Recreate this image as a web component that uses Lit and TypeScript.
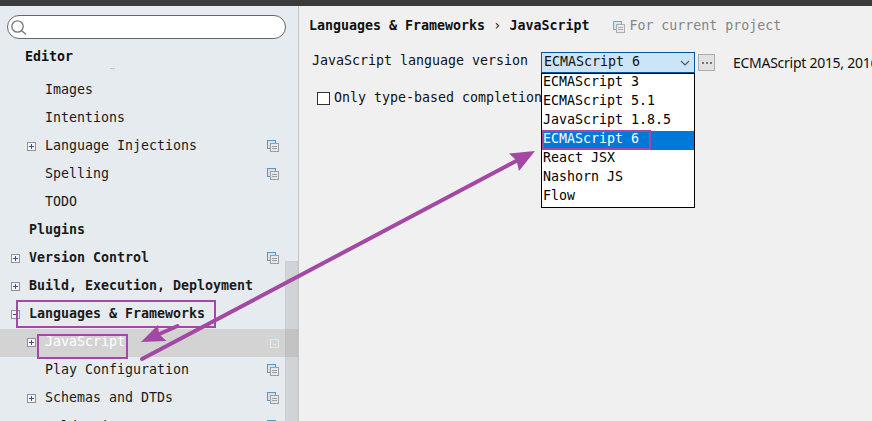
import { LitElement, html, css, svg, nothing } from "lit";
import { customElement, property } from "lit/decorators.js";
import { classMap } from "lit/directives/class-map.js";

interface TreeItem {
  label: string;
  level: 0 | 1;
  toggle?: "plus" | "minus";
  project?: boolean;
  selected?: boolean;
}

const ITEMS: TreeItem[] = [
  { label: "Images", level: 1 },
  { label: "Intentions", level: 1 },
  { label: "Language Injections", level: 1, toggle: "plus", project: true },
  { label: "Spelling", level: 1, project: true },
  { label: "TODO", level: 1 },
  { label: "Plugins", level: 0 },
  { label: "Version Control", level: 0, toggle: "plus", project: true },
  { label: "Build, Execution, Deployment", level: 0, toggle: "plus" },
  { label: "Languages & Frameworks", level: 0, toggle: "minus" },
  { label: "JavaScript", level: 1, toggle: "plus", project: true, selected: true },
  { label: "Play Configuration", level: 1, project: true },
  { label: "Schemas and DTDs", level: 1, toggle: "plus", project: true },
  { label: "Weld Unit", level: 1, project: true },
];

const VERSIONS = [
  "ECMAScript 3",
  "ECMAScript 5.1",
  "JavaScript 1.8.5",
  "ECMAScript 6",
  "React JSX",
  "Nashorn JS",
  "Flow",
];

@customElement("project-icon")
class ProjectIcon extends LitElement {
  @property({ type: Boolean }) faded = false;

  static styles = css`
    :host { display: block; width: 12px; height: 12px; }
    svg { display: block; }
  `;

  render() {
    const back = this.faded ? "#bfe0f2" : "#4f9dc6";
    const backFill = this.faded ? "#d3d3d3" : "#d3e3ec";
    const front = this.faded ? "#e6e6e6" : "#9c9ea0";
    const fill = this.faded ? "#d4d4d4" : "#e6e8ea";
    return html`<svg width="12" height="12" viewBox="0 0 12 12">
      <rect x="0.5" y="0.5" width="8" height="8" fill=${backFill} stroke=${back} />
      <rect x="3.5" y="3.5" width="8" height="8" fill=${fill} stroke=${front} />
      <path d=${this.faded ? "M6 8.5h3" : "M5 6.5h5M5 8.5h5"} stroke=${front} />
    </svg>`;
  }
}

@customElement("settings-tree")
class SettingsTree extends LitElement {
  static styles = css`
    :host { display: block; }
    .row {
      display: flex; align-items: flex-start; height: 28px;
      padding: 0 19px 0 11px; box-sizing: border-box;
      font-size: 13.29px; line-height: 25px; white-space: nowrap; color: #1b1b1b;
    }
    .row.child { padding-left: 27px; }
    .row.root { font-weight: bold; }
    .row.selected { background: #d3d3d3; color: #fff; }
    .row:last-of-type { line-height: 27px; }
    .toggle { width: 18px; height: 9px; padding-top: 9px; }
    .toggle svg { display: block; }
    .label { flex: 1; }
    project-icon { margin-top: 7px; }
  `;

  private toggle(kind?: string) {
    if (!kind) return nothing;
    return html`<svg width="9" height="9">
      <rect x=".5" y=".5" width="8" height="8" fill="#f6f6f6" stroke="#919191" />
      <path d=${kind === "plus" ? "M2 4.5h5M4.5 2v5" : "M2 4.5h5"} stroke="#344f9c" />
    </svg>`;
  }

  render() {
    return ITEMS.map(
      (i) => html`<div class=${classMap({ row: true, child: i.level === 1, root: i.level === 0, selected: !!i.selected })}>
        <span class="toggle">${this.toggle(i.toggle)}</span>
        <span class="label">${i.label}</span>
        ${i.project ? html`<project-icon ?faded=${i.selected}></project-icon>` : nothing}
      </div>`
    );
  }
}

@customElement("app-root")
class AppRoot extends LitElement {
  static styles = css`
    :host {
      display: flex; flex-direction: column; position: relative;
      width: 872px; height: 421px; overflow: hidden; background: #f0f0f0;
      font-family: "DejaVu Sans Mono", "Liberation Mono", monospace;
      font-size: 13.29px; color: #111; white-space: nowrap;
    }
    .titlebar { height: 6px; flex: none; background: #3b3b3b; }
    .body { flex: 1; min-height: 0; display: flex; }
    .sidebar {
      width: 298px; flex: none; position: relative; overflow: hidden;
      background: #e6ebef; border-right: 1px solid #c3c5c7;
    }
    .search {
      box-sizing: border-box; width: 279px; height: 24px; margin: 9px 0 0 7px;
      border: 1px solid #666; border-radius: 12px; background: #fff; padding: 4px 3px;
    }
    .search svg { display: block; }
    .editor { height: 38px; box-sizing: border-box; padding: 4px 0 0 25px; line-height: 28px; font-weight: bold; }
    .remnant { position: absolute; left: 110px; top: 62px; width: 5px; height: 1px; background: #c5c8cb; }
    .scroll {
      position: absolute; right: 0; top: 255px; bottom: 0; width: 13px; box-sizing: border-box;
      background: rgba(150, 152, 153, 0.27); border: 1px solid rgba(150, 152, 153, 0.1); border-bottom: 0;
    }
    .main { flex: 1; min-width: 0; padding-left: 10px; overflow: hidden; }
    .crumbs { display: flex; height: 40px; line-height: 40px; font-weight: bold; }
    .sep { width: 24.5px; text-align: center; font-weight: normal; }
    .scope { display: flex; margin-left: 24px; gap: 4px; font-weight: normal; color: #858585; }
    .scope project-icon { margin-top: 15px; opacity: 0.8; }
    .version { display: flex; height: 40px; padding: 6px 0 0 3px; box-sizing: border-box; }
    .version label { width: 229px; line-height: 18px; flex: none; }
    .combo {
      position: relative; width: 154px; height: 21px; box-sizing: border-box; flex: none;
      background: #cce4f7; border: 1px solid #00549a; padding-left: 2px; line-height: 17px;
    }
    .combo .arrow { position: absolute; right: 4px; top: 7px; }
    .list {
      position: absolute; left: -1px; top: 20px; width: 152px; height: 133px; z-index: 1;
      border: 1px solid #000; background: #fff;
    }
    .option { height: 19px; line-height: 16px; padding-left: 1px; color: #000; }
    .option.active { background: #0078d7; color: #fff; }
    .more {
      width: 17px; height: 17px; box-sizing: border-box; margin: 2px 18px 0 3px; flex: none;
      border: 1px solid #adadad; background: #e1e1e1;
      display: flex; align-items: center; justify-content: center; gap: 2px;
    }
    .more i { width: 2px; height: 2px; background: #777; }
    .note { font: 14px/20px "Noto Sans", sans-serif; letter-spacing: -0.27px; margin-top: 1px; }
    .check { display: flex; padding: 4px 0 0 8px; gap: 4px; line-height: 15px; }
    .box { width: 13px; height: 13px; box-sizing: border-box; border: 1px solid #333; background: #fff; margin-top: 2px; }
    .marks { position: absolute; left: 0; top: 0; z-index: 2; }
  `;

  private frame(x: number, y: number, w: number, h: number) {
    return svg`<rect x=${x + 1} y=${y + 1} width=${w - 2} height=${h - 2} />`;
  }

  render() {
    return html`
      <div class="titlebar"></div>
      <div class="body">
        <div class="sidebar">
          <div class="search">
            <svg width="17" height="16" fill="none" stroke="#777" stroke-width="1.3">
              <circle cx="6.5" cy="6.5" r="5.7" />
              <path d="M10.5 10.5l4.5 4" />
            </svg>
          </div>
          <div class="editor">Editor</div>
          <div class="remnant"></div>
          <settings-tree></settings-tree>
          <div class="scroll"></div>
        </div>
        <div class="main">
          <div class="crumbs"><span>Languages &amp; Frameworks</span><span class="sep">›</span><span>JavaScript</span><span class="scope"><project-icon></project-icon><span>For current project</span></span></div>
          <div class="version"><label>JavaScript language version</label><div class="combo">ECMAScript 6<svg class="arrow" width="10" height="7" fill="none" stroke="#555" stroke-width="1.2"><path d="M1 1l4 4 4-4" /></svg><div class="list">${VERSIONS.map(
            (v) => html`<div class=${classMap({ option: true, active: v === "ECMAScript 6" })}>${v}</div>`
          )}</div></div><div class="more"><i></i><i></i><i></i></div><span class="note">ECMAScript 2015, 2016</span></div>
          <div class="check"><span class="box"></span><span>Only type-based completion</span></div>
        </div>
      </div>
      <svg class="marks" width="872" height="421" fill="none" stroke="#a349a4" stroke-width="2">
        ${this.frame(16, 300, 200, 28)}
        ${this.frame(37, 334, 91, 25)}
        ${this.frame(542, 130, 109, 20)}
        <path d="M142 359L520 159M177.5 326L156 335.5" stroke-width="4" stroke-linecap="round" />
        <path d="M535 151L509 153.5L516.5 160.5L519 171ZM141 342L158 325L159 334L166.5 341Z" fill="#a349a4" stroke="none" />
      </svg>
    `;
  }
}
